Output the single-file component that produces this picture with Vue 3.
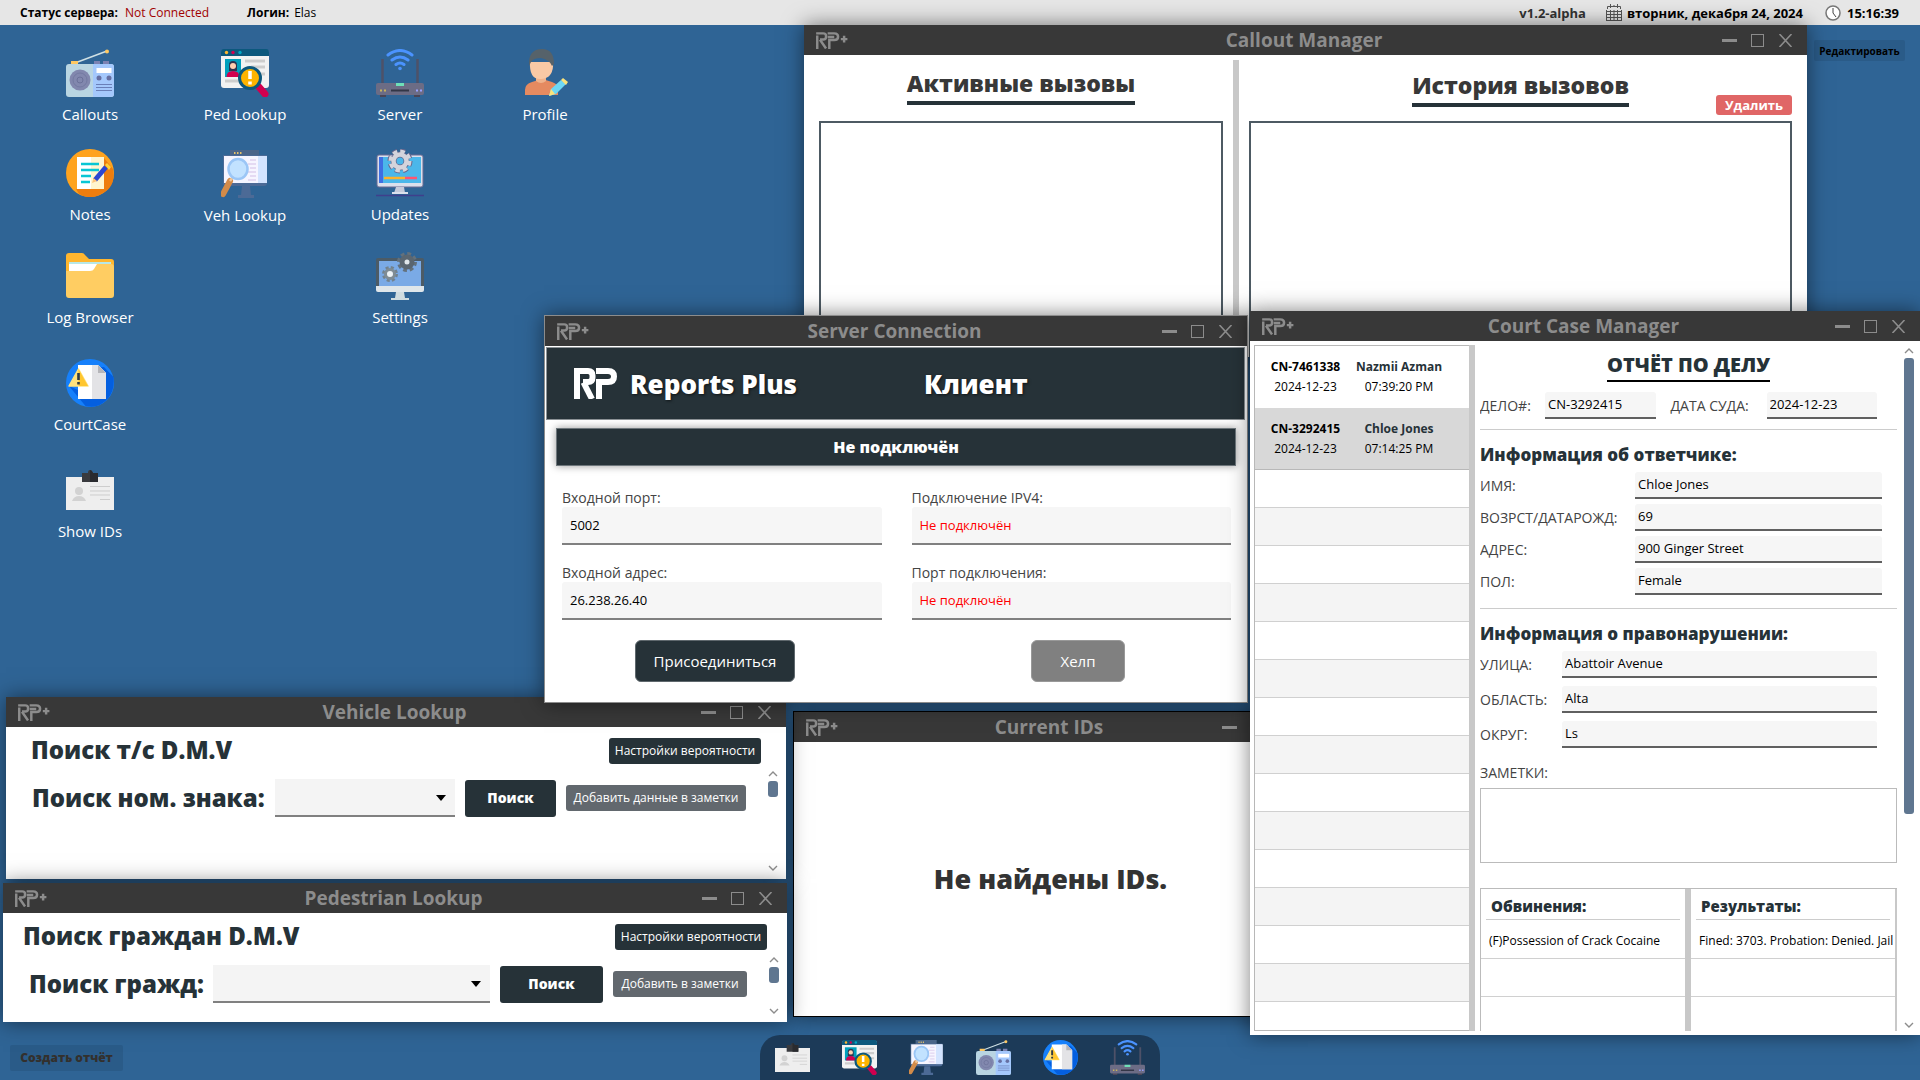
<script setup>
import { ref } from 'vue'

const shortcuts = [
  { icon: 'radio', label: 'Callouts', x: 90, y: 49 },
  { icon: 'ped', label: 'Ped Lookup', x: 245, y: 49 },
  { icon: 'router', label: 'Server', x: 400, y: 49 },
  { icon: 'profile', label: 'Profile', x: 545, y: 49 },
  { icon: 'notes', label: 'Notes', x: 90, y: 149 },
  { icon: 'veh', label: 'Veh Lookup', x: 245, y: 150 },
  { icon: 'updates', label: 'Updates', x: 400, y: 149 },
  { icon: 'folder', label: 'Log Browser', x: 90, y: 252 },
  { icon: 'settings', label: 'Settings', x: 400, y: 252 },
  { icon: 'court', label: 'CourtCase', x: 90, y: 359 },
  { icon: 'idcard', label: 'Show IDs', x: 90, y: 466 },
]
const dock = [
  { icon: 'idcard', label: 'Show IDs' },
  { icon: 'ped', label: 'Ped Lookup' },
  { icon: 'veh', label: 'Veh Lookup' },
  { icon: 'radio', label: 'Callouts' },
  { icon: 'court', label: 'CourtCase' },
  { icon: 'router', label: 'Server' },
]
const lookups = [
  {
    id: 'vehicle', title: 'Vehicle Lookup', heading: 'Поиск т/с D.M.V', label: 'Поиск ном. знака:',
    add: 'Добавить данные в заметки',
  },
  {
    id: 'pedestrian', title: 'Pedestrian Lookup', heading: 'Поиск граждан D.M.V', label: 'Поиск гражд:',
    add: 'Добавить в заметки',
  },
]
const connection = ref([
  { id: 'in-port', label: 'Входной порт:', value: '5002' },
  { id: 'ipv4', label: 'Подключение IPV4:', value: 'Не подключён', off: true },
  { id: 'in-addr', label: 'Входной адрес:', value: '26.238.26.40' },
  { id: 'out-port', label: 'Порт подключения:', value: 'Не подключён', off: true },
])
const cases = [
  { number: 'CN-7461338', name: 'Nazmii Azman', date: '2024-12-23', time: '07:39:20 PM' },
  { number: 'CN-3292415', name: 'Chloe Jones', date: '2024-12-23', time: '07:14:25 PM' },
]
const defendant = ref([
  { id: 'name', label: 'ИМЯ:', value: 'Chloe Jones' },
  { id: 'age', label: 'ВОЗРСТ/ДАТАРОЖД:', value: '69' },
  { id: 'address', label: 'АДРЕС:', value: '900 Ginger Street' },
  { id: 'gender', label: 'ПОЛ:', value: 'Female' },
])
const offence = ref([
  { id: 'street', label: 'УЛИЦА:', value: 'Abattoir Avenue' },
  { id: 'area', label: 'ОБЛАСТЬ:', value: 'Alta' },
  { id: 'county', label: 'ОКРУГ:', value: 'Ls' },
])
const results = [
  { id: 'charges', title: 'Обвинения:', row: '(F)Possession of Crack Cocaine' },
  { id: 'outcomes', title: 'Результаты:', row: 'Fined: 3703. Probation: Denied. Jail' },
]
const caseNumber = ref('CN-3292415')
const courtDate = ref('2024-12-23')
</script>

<template>
  <div class="desktop">
    <svg class="defs" width="0" height="0" aria-hidden="true">
      <symbol id="rp" viewBox="0 0 43 31">
        <g fill="none" stroke="currentColor" stroke-width="6">
          <path d="M0 3h14q4.500 0 4.500 4.500v2q0 4.500-4.500 4.500H9" />
          <path d="M3 6V31" />
          <path d="M9.500 14.500 18 31" />
          <path d="M22 3h12q6 0 6 5.500T34 14h-9v17" />
        </g>
      </symbol>
      <symbol id="rp-plus" viewBox="0 0 58 31">
        <g fill="none" stroke="currentColor" stroke-width="4.500">
          <path d="M1 2.500h13q5 0 5 4.500v2q0 4.500-5 4.500H8" />
          <path d="M3 6.500V31M8 14l11 16" />
          <path d="M22 2.500h12q7 0 7 6t-7 6h-9V31M22 9h12" />
          <path d="M46 13h12M52 7v12" />
        </g>
      </symbol>
      <symbol id="min" viewBox="0 0 15 13"><path d="M0 6.500h15" stroke="currentColor" stroke-width="3" /></symbol>
      <symbol id="max" viewBox="0 0 15 13"><rect x="1.500" y=".5" width="12" height="12" fill="none" stroke="currentColor" /></symbol>
      <symbol id="close" viewBox="0 0 15 13"><path d="m1.500 0 12 13m0-13-12 13" stroke="currentColor" stroke-width="1.600" /></symbol>
      <symbol id="up" viewBox="0 0 10 6"><path d="m1 5 4-4 4 4" fill="none" stroke="#8c8c8c" stroke-width="1.400" /></symbol>
      <symbol id="down" viewBox="0 0 10 6"><path d="m1 1 4 4 4-4" fill="none" stroke="#8c8c8c" stroke-width="1.400" /></symbol>
      <symbol id="calendar" viewBox="0 0 16 17">
        <path d="M1.500 5V2.500h13V5M4.500 0v4M8 1v2M11.500 0v4" fill="none" stroke="#555" />
        <path d="M0 7.500h16M0 10.500h16M0 13.500h16M.5 6v10.500M4.500 6v10.500M8 6v10.500M11.500 6v10.500M15.500 6v10.500M0 16.500h16" stroke="#555" fill="none" />
      </symbol>
      <symbol id="clock" viewBox="0 0 16 16">
        <circle cx="8" cy="8" r="7" fill="#fff" stroke="#777" stroke-width="1.500" />
        <path d="M8 3v5l3 4" fill="none" stroke="#444" />
      </symbol>

      <symbol id="radio" viewBox="0 0 48 48">
        <path d="M9 14 41 2" stroke="#cfe0e4" stroke-width="1.500" />
        <circle cx="41" cy="2.500" r="2" fill="#ffc862" />
        <rect x="5" y="12" width="7" height="4" fill="#ffc862" />
        <path d="M28 12h6v4h-6zM37 12h6v4h-6z" fill="#7d83b3" />
        <rect y="15" width="48" height="33" rx="3" fill="#b9d5e2" />
        <path d="M27 15h18a3 3 0 0 1 3 3v27a3 3 0 0 1-3 3H27z" fill="#a4c8fc" />
        <circle cx="14" cy="31" r="10.500" fill="#8288ae" />
        <circle cx="14" cy="31" r="7" fill="none" stroke="#737aa2" />
        <circle cx="14" cy="31" r="3" fill="none" stroke="#6b7199" />
        <rect x="30.500" y="19" width="15" height="5" fill="#fff" />
        <circle cx="33" cy="29" r="2.500" fill="#6670a2" /><circle cx="43" cy="29" r="2.500" fill="#6670a2" />
        <path d="M30 35.500h16M30 38.500h16M30 41.500h16" stroke="#6a7fb8" />
      </symbol>
      <symbol id="ped" viewBox="0 0 48 48">
        <rect y="1" width="48" height="38" rx="3" fill="#f2f2f2" />
        <path d="M0 7V3a3 3 0 0 1 3-3h42a3 3 0 0 1 3 3v4z" fill="#0c587d" />
        <circle cx="5.500" cy="3.500" r="1.700" fill="#fdb62f" /><circle cx="12" cy="3.500" r="1.700" fill="#d1004f" /><circle cx="19" cy="3.500" r="1.700" fill="#00a7c4" />
        <rect x="4" y="10" width="16" height="18" fill="#00a0bc" />
        <path d="M8 22v-6q0-4 4-4t4 4v6z" fill="#2c3550" />
        <circle cx="12" cy="17" r="3" fill="#ffd0b0" />
        <path d="M5.500 28q0-6 6.500-6t6.500 6z" fill="#d1004f" />
        <path d="M24 12h20M30 18h14M38 25h6M4 32h14" stroke="#cdcdcd" stroke-width="3" />
        <path d="m38 38 6 7" stroke="#d1004f" stroke-width="7" stroke-linecap="round" />
        <circle cx="29" cy="29" r="10.500" fill="#fdb400" stroke="#0c587d" stroke-width="3" />
        <path d="M29 22v8M29 32.500v3" stroke="#fff" stroke-width="3.500" />
      </symbol>
      <symbol id="router" viewBox="0 0 48 48">
        <path d="M12 6q12-9 24 0M16 11q8-6 16 0M20 15.500q4-3 8 0" fill="none" stroke="#4b93ff" stroke-width="3" stroke-linecap="round" />
        <circle cx="24" cy="19.500" r="1.800" fill="#4b93ff" />
        <path d="M6.500 10v26M41.500 10v26" stroke="#4e5168" stroke-width="2.500" />
        <path d="M4 45h6v3H4zM38 45h6v3h-6z" fill="#4a4556" />
        <rect y="34" width="48" height="12" rx="2" fill="#6c6c85" />
        <rect x="20" y="34" width="8" height="3" fill="#6fe0b8" />
        <path d="M15 41.500h18" stroke="#333647" stroke-width="2" />
        <path d="M4 41.500h2M8 41.500h2" stroke="#c9b45c" stroke-width="2" />
        <path d="M40 41.500h2M44 41.500h2" stroke="#98a0ff" stroke-width="2" />
      </symbol>
      <symbol id="profile" viewBox="0 0 48 48">
        <path d="M4 46V41q0-6 7-8l8-2.500h4l8 2.500q6 2 6 6v7z" fill="#e58a60" />
        <path d="M15 24h10v8q-5 4-10 0z" fill="#f0b38c" />
        <path d="M9 13h23q1 16-11.500 17T9 13z" fill="#f9c9a5" />
        <path d="M8 17Q7 0 21 0q12 0 12 15l-2 2q-2-6-11-8-8 0-10 4z" fill="#56626a" />
        <path d="m28 47 2-7L40 31l5 4-10 10z" fill="#6ed8f5" />
        <path d="m40 31 2-2 5 4-2 3zM28 47l2-7 4 5z" fill="#fbe37b" />
      </symbol>
      <symbol id="notes" viewBox="0 0 48 48">
        <circle cx="24" cy="24" r="24" fill="#ffa31e" />
        <path d="M38 9 47 20q4 20-16 27-10 3-18-2l-3-5 28-3z" fill="#ee7d0e" />
        <path d="M11 8h27v32H11z" fill="#fff" /><path d="M25 8h13v32H25z" fill="#fff5cf" />
        <path d="M15 15h18M15 21h18M15 27h10M15 33h9" stroke="#08c6d4" stroke-width="2.500" />
        <path d="M29 31 40 18" stroke="#2d46d0" stroke-width="5" />
        <path d="m39 16 2-2 4 4-2 3z" fill="#ffd236" /><path d="m26 34 1.500-5 3.500 3z" fill="#ffc37a" />
      </symbol>
      <symbol id="veh" viewBox="0 0 48 48">
        <path d="M9 0h29v7H9z" fill="#4a6589" />
        <path d="M13 3h1.500M16 3h1.500M19 3h1.500" stroke="#e5c16a" stroke-width="2" />
        <path d="M2 5h44v28a3 3 0 0 1-3 3H5a3 3 0 0 1-3-3z" fill="#4c6a96" />
        <path d="M3 6h43v27H3z" fill="#f6f5ff" /><path d="M37 6h9v27h-9z" fill="#d3e4ff" />
        <path d="M29 10h6M27 14h8M29 18h6M27 22h8M29 26h6M27 30h8" stroke="#d3bfe6" />
        <path d="M21 36h8l1 9h3v3H17v-3h3z" fill="#4c6a96" />
        <path d="m9 31-7 13" stroke="#d38b49" stroke-width="6" stroke-linecap="round" />
        <path d="m9 31 3-4" stroke="#f0c89c" stroke-width="2.500" />
        <ellipse cx="17" cy="19" rx="9.500" ry="10" fill="#c2e2ff" stroke="#9bc6f6" stroke-width="2.500" />
      </symbol>
      <symbol id="updates" viewBox="0 0 48 48">
        <rect x="1" y="6" width="46" height="32" rx="2" fill="#dbe0ec" stroke="#6b6b93" />
        <path d="M3 8h42v26H3z" fill="#4bb7ea" /><path d="M3 8h4v26H3z" fill="#3f6fe2" />
        <circle cx="24" cy="12" r="10" fill="none" stroke="#66668c" stroke-width="5" stroke-dasharray="4.850 3" />
        <circle cx="24" cy="12" r="6.500" fill="#4bb7ea" stroke="#66668c" stroke-width="6" />
        <circle cx="24" cy="12" r="9.500" fill="none" stroke="#d4d4dc" stroke-width="4" stroke-dasharray="4.460 3" />
        <circle cx="24" cy="12" r="6.500" fill="none" stroke="#d4d4dc" stroke-width="4.500" />
        <path d="M8 29h21" stroke="#ffb22a" stroke-width="2.500" /><path d="M29 29h12" stroke="#ff5470" stroke-width="2.500" />
        <path d="M20 38h8l1 6H18z" fill="#c6cbdc" /><path d="M0 46.500h48" stroke="#3f3f8c" stroke-width="1.500" /><path d="M16 44h16" stroke="#dbe0ec" stroke-width="2" />
      </symbol>
      <symbol id="folder" viewBox="0 0 48 48">
        <path d="M0 4q0-3 3-3h13q2 0 3 2l4 4h22q3 0 3 3v12H0z" fill="#ffb62f" />
        <path d="M3 10h42v10H3z" fill="#b7e8e8" /><path d="M3 12h36v9H3z" fill="#fff" />
        <path d="M0 19h24q3 0 4-2l3-5h14q3 0 3 3v28q0 3-3 3H3q-3 0-3-3z" fill="#ffcd62" />
      </symbol>
      <symbol id="settings" viewBox="0 0 48 48">
        <path d="M0 8q0-2 2-2h44q2 0 2 2v27H0z" fill="#4c5b66" />
        <path d="M3 9h42v26H3z" fill="#7aaae6" /><path d="M0 34h48v4q0 2-2 2H2q-2 0-2-2z" fill="#dfe6ea" />
        <path d="M20 40h8l1 6h4v2H15v-2h4z" fill="#d0dce0" />
        <circle cx="31" cy="10" r="8" fill="none" stroke="#63717c" stroke-width="4" stroke-dasharray="3.600 2.680" />
        <circle cx="31" cy="10" r="5" fill="#dfe6ea" stroke="#5a6670" stroke-width="5" />
        <circle cx="14" cy="22" r="6.500" fill="none" stroke="#72828e" stroke-width="3" stroke-dasharray="3 2.100" />
        <circle cx="14" cy="22" r="4.500" fill="#eef3f5" stroke="#7f8c94" stroke-width="3" />
      </symbol>
      <symbol id="court" viewBox="0 0 48 48">
        <circle cx="24" cy="24" r="24" fill="#1680fb" />
        <path d="m3 27 9 4V10l26-2 9.500 10q2 20-14 28-6 3-14 1z" fill="#045fe0" />
        <path d="M12 6h20l8 8v26H12z" fill="#fff" /><path d="M26 6h6l8 8v26H26z" fill="#e3e3e6" />
        <path d="M32 6v8h8z" fill="#b6b6ba" />
        <path d="M12.500 10 22 27H3z" fill="#ffe27d" stroke="#ffe27d" stroke-width="1.500" stroke-linejoin="round" />
        <path d="M12.500 10 22 27h-9.500z" fill="#ffc630" />
        <path d="M12.500 14v7M12.500 23v2.500" stroke="#2f3a44" stroke-width="2.600" />
      </symbol>
      <symbol id="idcard" viewBox="0 0 48 48">
        <path d="M0 11h48v33H0z" fill="#eee" />
        <circle cx="13" cy="25" r="4" fill="#d2d2d2" /><path d="M6 35q2-5 7-5t7 5z" fill="#d2d2d2" />
        <path d="M24 20.500h20M24 25h20M24 29h20M34 33.500h10" stroke="#cdcdcd" />
        <path d="M16 7h6q0-3 2-3t3 3h5v9H16z" fill="#393a3e" /><path d="M24 4q2 0 3 3h5v9h-8z" fill="#2a2b2f" />
      </symbol>
    </svg>

    <header class="topbar">
      <div class="status">
        <b>Статус сервера:</b><span class="offline">Not Connected</span>
        <b class="login">Логин:</b><span>Elas</span>
      </div>
      <div class="clock">
        <b class="version">v1.2-alpha</b>
        <svg width="16" height="17"><use href="#calendar" /></svg>
        <b class="date">вторник, декабря 24, 2024</b>
        <svg width="16" height="16"><use href="#clock" /></svg>
        <b>15:16:39</b>
      </div>
    </header>

    <button
      v-for="s in shortcuts" :key="s.label" class="shortcut" type="button"
      :style="{ left: s.x + 'px', top: s.y + 'px' }"
    >
      <svg width="48" height="48"><use :href="'#' + s.icon" /></svg>
      <span>{{ s.label }}</span>
    </button>

    <button class="ghost edit" type="button">Редактировать</button>
    <button class="ghost create" type="button">Создать отчёт</button>

    <section class="window callouts">
      <div class="titlebar">
        <svg class="logo"><use href="#rp-plus" /></svg>
        <h2>Callout Manager</h2>
        <div class="controls">
          <button v-for="c in ['min', 'max', 'close']" :key="c" type="button" :aria-label="c"><svg><use :href="'#' + c" /></svg></button>
        </div>
      </div>
      <div class="callout-body">
        <div class="pane">
          <div class="pane-head"><h3>Активные вызовы</h3></div>
          <div class="box"></div>
        </div>
        <div class="divider"></div>
        <div class="pane">
          <div class="pane-head history">
            <h3>История вызовов</h3>
            <button class="delete" type="button">Удалить</button>
          </div>
          <div class="box"></div>
        </div>
      </div>
    </section>

    <section class="window ids">
      <div class="titlebar">
        <svg class="logo"><use href="#rp-plus" /></svg>
        <h2>Current IDs</h2>
        <div class="controls">
          <button v-for="c in ['min', 'max', 'close']" :key="c" type="button" :aria-label="c"><svg><use :href="'#' + c" /></svg></button>
        </div>
      </div>
      <p class="empty">Не найдены IDs.</p>
    </section>

    <section v-for="l in lookups" :key="l.id" class="window lookup" :class="l.id">
      <div class="titlebar">
        <svg class="logo"><use href="#rp-plus" /></svg>
        <h2>{{ l.title }}</h2>
        <div class="controls">
          <button v-for="c in ['min', 'max', 'close']" :key="c" type="button" :aria-label="c"><svg><use :href="'#' + c" /></svg></button>
        </div>
      </div>
      <div class="lookup-head">
        <h3>{{ l.heading }}</h3>
        <button class="dark small" type="button">Настройки вероятности</button>
      </div>
      <div class="lookup-scroll">
        <form class="lookup-form" @submit.prevent>
          <label :for="l.id + '-query'">{{ l.label }}</label>
          <div class="combo">
            <select :id="l.id + '-query'"><option></option></select>
            <svg width="10" height="6" viewBox="0 0 10 6"><path d="M0 0h10L5 6z" /></svg>
          </div>
          <button class="dark search" type="submit">Поиск</button>
          <button class="grey small" type="button">{{ l.add }}</button>
        </form>
        <div class="scrollbar">
          <svg width="10" height="6"><use href="#up" /></svg>
          <div class="thumb"></div>
          <svg width="10" height="6"><use href="#down" /></svg>
        </div>
      </div>
    </section>

    <section class="window server">
      <div class="titlebar">
        <svg class="logo"><use href="#rp-plus" /></svg>
        <h2>Server Connection</h2>
        <div class="controls">
          <button v-for="c in ['min', 'max', 'close']" :key="c" type="button" :aria-label="c"><svg><use :href="'#' + c" /></svg></button>
        </div>
      </div>
      <div class="banner">
        <div class="brand"><svg width="43" height="31"><use href="#rp" /></svg><span>Reports Plus</span></div>
        <span>Клиент</span>
      </div>
      <div class="state">Не подключён</div>
      <form class="connection" @submit.prevent>
        <div v-for="f in connection" :key="f.id" class="field">
          <label :for="f.id">{{ f.label }}</label>
          <input :id="f.id" v-model="f.value" type="text" :class="{ off: f.off }">
        </div>
      </form>
      <div class="actions">
        <button class="join" type="button">Присоединиться</button>
        <button class="help" type="button">Хелп</button>
      </div>
    </section>

    <section class="window court">
      <div class="titlebar">
        <svg class="logo"><use href="#rp-plus" /></svg>
        <h2>Court Case Manager</h2>
        <div class="controls">
          <button v-for="c in ['min', 'max', 'close']" :key="c" type="button" :aria-label="c"><svg><use :href="'#' + c" /></svg></button>
        </div>
      </div>
      <div class="court-body">
        <ul class="cases">
          <li v-for="(c, i) in cases" :key="c.number" class="case" :class="{ selected: i === 1 }">
            <div><b>{{ c.number }}</b><span>{{ c.date }}</span></div>
            <div><b class="who">{{ c.name }}</b><span>{{ c.time }}</span></div>
          </li>
          <li v-for="n in 15" :key="n" class="blank"></li>
        </ul>
        <div class="divider"></div>
        <div class="report">
          <h3 class="report-title"><span>ОТЧЁТ ПО ДЕЛУ</span></h3>
          <div class="case-row">
            <label class="l1" for="case-no">ДЕЛО#:</label><input id="case-no" v-model="caseNumber" type="text">
            <label class="l2" for="case-date">ДАТА СУДА:</label><input id="case-date" v-model="courtDate" type="text">
          </div>
          <hr>
          <h4>Информация об ответчике:</h4>
          <div class="rows defendant">
            <div v-for="f in defendant" :key="f.id" class="row">
              <label :for="f.id">{{ f.label }}</label><input :id="f.id" v-model="f.value" type="text">
            </div>
          </div>
          <hr>
          <h4>Информация о правонарушении:</h4>
          <div class="rows offence">
            <div v-for="f in offence" :key="f.id" class="row">
              <label :for="f.id">{{ f.label }}</label><input :id="f.id" v-model="f.value" type="text">
            </div>
          </div>
          <label class="notes-label" for="case-notes">ЗАМЕТКИ:</label>
          <textarea id="case-notes"></textarea>
          <div class="tables">
            <div v-for="r in results" :key="r.id" class="result">
              <table>
                <thead><tr><th scope="col"><span>{{ r.title }}</span></th></tr></thead>
                <tbody><tr><td>{{ r.row }}</td></tr><tr><td></td></tr><tr><td></td></tr></tbody>
              </table>
            </div>
          </div>
        </div>
        <div class="scrollbar tall">
          <svg width="10" height="6"><use href="#up" /></svg>
          <div class="thumb"></div>
          <svg width="10" height="6"><use href="#down" /></svg>
        </div>
      </div>
    </section>

    <nav class="dock">
      <button v-for="d in dock" :key="d.icon" type="button" :aria-label="d.label">
        <svg width="35" height="35"><use :href="'#' + d.icon" /></svg>
      </button>
    </nav>
  </div>
</template>

<style>
body {
  margin: 0;
  background: #2f6495;
}
</style>

<style scoped>
.desktop {
  position: relative;
  min-height: 100vh;
  overflow: hidden;
  background: #2f6495;
  color: #000;
  font: 12px/16px "Open Sans", "Noto Sans", sans-serif;
}
.desktop *,
.desktop *::before {
  box-sizing: border-box;
}
.defs {
  position: absolute;
}
button,
input,
select,
textarea {
  margin: 0;
  padding: 0;
  border: 0;
  border-radius: 0;
  outline: 0;
  background: none;
  color: inherit;
  font: inherit;
}
h2,
h3,
h4,
p,
ul {
  margin: 0;
  padding: 0;
  list-style: none;
}
svg {
  display: block;
  flex: none;
}

.topbar {
  display: flex;
  justify-content: space-between;
  height: 25px;
  padding: 0 21px 0 20px;
  background: #e6e6e6;
}
.status,
.clock {
  display: flex;
  align-items: center;
}
.clock {
  font-size: 13px;
}
.offline {
  margin-left: 7px;
  color: #a00000;
}
.login {
  margin: 0 5px 0 38px;
}
.version {
  margin-right: 20px;
  color: #333;
}
.date {
  margin: 0 22px 0 5px;
}
.clock b:last-child {
  margin-left: 6px;
}

.shortcut {
  position: absolute;
  display: flex;
  flex-direction: column;
  align-items: center;
  gap: 7px;
  width: 110px;
  margin-left: -55px;
  color: #fff;
  font-size: 15px;
  line-height: 20px;
}
.ghost {
  position: absolute;
  border-radius: 2px;
  background: #2a5b88;
  font-weight: 800;
}
.edit {
  top: 40px;
  right: 15px;
  width: 91px;
  height: 21px;
  font-size: 10px;
  font-weight: 700;
}
.create {
  bottom: 9px;
  left: 10px;
  width: 113px;
  height: 26px;
  color: #33302d;
  font-size: 12px;
}

.window {
  position: absolute;
  display: flex;
  flex-direction: column;
  background: #fff;
  box-shadow: 0 0 20px rgba(0, 0, 0, .5);
}
.titlebar {
  display: grid;
  flex: none;
  grid-template-columns: 1fr auto 1fr;
  align-items: center;
  height: 30px;
  padding: 0 14px 0 11px;
  background: #383838;
  color: #8c8c8c;
}
.titlebar h2 {
  font-size: 19px;
  font-weight: 700;
  line-height: 28px;
}
.logo {
  width: 33px;
  height: 17px;
}
.controls {
  display: flex;
  gap: 13px;
  justify-self: end;
}
.controls svg {
  width: 15px;
  height: 13px;
}
.divider {
  width: 6px;
  background: #c8c8c8;
}

.callouts {
  top: 25px;
  left: 804px;
  width: 1003px;
  height: 332px;
}
.callout-body {
  display: grid;
  flex: 1;
  grid-template-columns: 404px 6px 1fr;
  gap: 10px;
  padding: 0 15px;
}
.callout-body .divider {
  margin-top: 5px;
}
.pane {
  display: flex;
  flex-direction: column;
}
.pane-head {
  display: grid;
  grid-template-columns: 1fr auto 1fr;
  align-items: end;
  height: 66px;
  padding-bottom: 16px;
}
.pane-head h3 {
  grid-column: 2;
  padding-bottom: 3px;
  border-bottom: 4px solid #263238;
  color: #383838;
  font-size: 23px;
  font-weight: 800;
  line-height: 30px;
}
.pane-head.history {
  padding-bottom: 6px;
}
.history h3 {
  margin-bottom: 8px;
}
.delete {
  justify-self: end;
  width: 76px;
  height: 20px;
  border-radius: 3px;
  background: #e06666;
  color: #fff;
  font-size: 13px;
  font-weight: 700;
  line-height: 18px;
}
.box {
  flex: 1;
  border: 2px solid #4d5a63;
}

.ids {
  top: 711px;
  left: 793px;
  width: 515px;
  height: 306px;
  border: 1px solid #000;
}
.empty {
  display: flex;
  flex: 1;
  align-items: center;
  justify-content: center;
  color: #333;
  font-size: 27px;
  font-weight: 800;
}

.vehicle {
  top: 697px;
  left: 6px;
  width: 780px;
  height: 182px;
}
.pedestrian {
  top: 883px;
  left: 3px;
  width: 784px;
  height: 139px;
}
.lookup-head {
  display: flex;
  align-items: center;
  justify-content: space-between;
  height: 43px;
  padding: 5px 25px 0;
}
.pedestrian .lookup-head {
  padding: 5px 20px 0;
}
.lookup-head h3,
.lookup-form label {
  color: #263238;
  font-size: 24px;
  font-weight: 800;
  line-height: 32px;
  white-space: nowrap;
}
.lookup-head h3 {
  padding-bottom: 3px;
}
.lookup-scroll {
  display: flex;
  flex: 1;
  padding-right: 8px;
}
.lookup-form {
  display: flex;
  flex: 1;
  align-items: center;
  gap: 10px;
  height: 38px;
  margin: 9px 0 0 26px;
}
.lookup-form label {
  width: 233px;
}
.pedestrian .lookup-form label {
  width: 174px;
}
.combo {
  position: relative;
  width: 180px;
}
.pedestrian .combo {
  width: 277px;
}
.combo select {
  display: block;
  width: 100%;
  height: 38px;
  border-bottom: 2px solid #808080;
  background: #f4f4f4;
  appearance: none;
}
.combo svg {
  position: absolute;
  top: 16px;
  right: 9px;
  pointer-events: none;
}
.dark {
  border-radius: 3px;
  background: #263238;
  color: #fff;
}
.grey {
  border-radius: 3px;
  background: #62686e;
  color: #fff;
}
.small {
  width: 152px;
  height: 26px;
  font-size: 12px;
  white-space: nowrap;
}
.vehicle .grey {
  width: 180px;
}
.pedestrian .grey {
  width: 134px;
}
.search {
  width: 91px;
  height: 37px;
  font-size: 14px;
  font-weight: 800;
}
.pedestrian .search {
  width: 103px;
}
.scrollbar {
  display: flex;
  flex-direction: column;
  align-items: center;
  width: 10px;
  padding: 1px 0 8px;
}
.thumb {
  width: 10px;
  height: 16px;
  margin: 4px 0 auto;
  border-radius: 3px;
  background: #5f7690;
}

.server {
  top: 315px;
  left: 544px;
  width: 704px;
  height: 388px;
  border: 1px solid #8c8c8c;
}
.banner {
  display: grid;
  grid-template-columns: 377px 1fr;
  align-items: center;
  height: 73px;
  margin: 1px 2px 0 1px;
  border: 1px solid #8c9296;
  background: #263238;
  color: #fff;
  font-size: 26px;
  font-weight: 800;
  line-height: 34px;
  text-shadow: 1px 1px 3px rgba(0, 0, 0, .6);
}
.brand {
  display: flex;
  align-items: center;
  gap: 13px;
  padding-left: 27px;
}
.state {
  height: 38px;
  margin: 8px 11px 0;
  border: 1px solid #6d767b;
  background: #263238;
  box-shadow: 0 0 8px rgba(0, 0, 0, .4);
  color: #fff;
  font-size: 16px;
  font-weight: 800;
  line-height: 36px;
  text-align: center;
}
.connection {
  display: grid;
  grid-template-columns: 1fr 1fr;
  gap: 18px 30px;
  padding: 22px 16px 20px 17px;
}
.field {
  display: flex;
  flex-direction: column;
}
.field label {
  color: #444;
  font-size: 14px;
  line-height: 19px;
}
.field input {
  height: 38px;
  padding: 0 8px;
  border-bottom: 2px solid #808080;
  border-radius: 3px 3px 0 0;
  background: #f6f6f6;
  font-size: 13px;
}
.field .off {
  color: #f00;
}
.actions {
  display: flex;
  gap: 236px;
  padding-left: 90px;
}
.join,
.help {
  width: 160px;
  height: 42px;
  border: 1px solid #5f686d;
  border-radius: 6px;
  background: #263238;
  color: #fff;
  font-size: 15px;
}
.help {
  width: 94px;
  border-color: #999;
  background: #808080;
}

.court {
  top: 311px;
  right: 0;
  width: 670px;
  height: 724px;
}
.court-body {
  display: grid;
  flex: 1;
  grid-template-columns: 215px 6px 1fr 10px;
  min-height: 0;
  padding: 4px 6px 4px 4px;
}
.cases {
  overflow: hidden;
  border: 1px solid #b8b8b8;
  border-right: 0;
}
.case {
  display: grid;
  grid-template-columns: 101px 86px;
  height: 62px;
  padding-top: 11px;
  line-height: 20px;
  text-align: center;
}
.case b,
.case span {
  display: block;
  white-space: nowrap;
}
.case .who {
  color: #263238;
}
.selected {
  border-bottom: 1px solid #b8b8b8;
  background: #d8d8d8;
}
.blank {
  height: 38px;
  border-bottom: 1px solid #d0d0d0;
}
.blank:nth-child(even) {
  background: #f4f4f4;
}
.report {
  display: flex;
  flex-direction: column;
  min-width: 0;
  min-height: 0;
  margin: 0 7px 0 5px;
  overflow: hidden;
}
.report-title {
  margin-top: 7px;
  color: #263238;
  font-size: 20px;
  font-weight: 800;
  line-height: 26px;
  text-align: center;
}
.report-title span {
  display: inline-block;
  padding-bottom: 2px;
  border-bottom: 2px solid #000;
}
.report label {
  color: #444;
  font-size: 14px;
  line-height: 20px;
}
.report input {
  height: 27px;
  padding: 0 3px 2px;
  border-bottom: 2px solid #606060;
  border-radius: 3px 3px 0 0;
  background: #f6f6f6;
  font-size: 13px;
}
.case-row {
  display: flex;
  align-items: center;
  margin-top: 10px;
  padding-right: 20px;
}
.case-row input {
  flex: 1;
  min-width: 0;
}
.case-row .l1 {
  width: 65px;
}
.case-row .l2 {
  width: 96px;
  margin-left: 15px;
}
hr {
  width: 100%;
  margin: 10px 0 13px;
  border: 0;
  border-top: 1px solid #ccc;
}
h4 {
  margin-bottom: 5px;
  color: #263238;
  font-size: 17px;
  font-weight: 800;
  line-height: 24px;
}
.rows {
  display: flex;
  flex-direction: column;
  gap: 5px;
  padding: 0 15px 3px 0;
}
.row {
  display: grid;
  grid-template-columns: 155px 1fr;
  align-items: center;
}
.offence {
  gap: 8px;
  padding: 0 20px 0 0;
}
.offence .row {
  grid-template-columns: 82px 1fr;
}
.report .notes-label {
  margin: 15px 0 5px;
}
textarea {
  flex: none;
  height: 75px;
  border: 1px solid #bbb;
  resize: none;
}
.tables {
  display: grid;
  flex: 1;
  grid-template-columns: 51fr 50fr;
  min-height: 0;
  margin-top: 25px;
  overflow: hidden;
  border-top: 1px solid #bbb;
  border-left: 1px solid #bbb;
}
.result {
  min-width: 0;
  overflow: hidden;
  border-right: 6px solid #c8c8c8;
}
.result:last-child {
  border-right: 2px solid #c8c8c8;
}
table {
  width: 100%;
  border-collapse: collapse;
  table-layout: fixed;
}
th {
  padding: 0 5px;
  text-align: left;
}
th span {
  display: block;
  height: 31px;
  padding-left: 5px;
  border-bottom: 1px solid #ccc;
  color: #263238;
  font-size: 15px;
  font-weight: 800;
  line-height: 34px;
}
td {
  height: 38px;
  padding: 5px 0 0 8px;
  overflow: hidden;
  border-bottom: 1px solid #d0d0d0;
  white-space: nowrap;
}
.tall {
  padding: 3px 0;
}
.tall .thumb {
  height: 456px;
}
.dock {
  position: absolute;
  bottom: 0;
  left: 50%;
  display: flex;
  justify-content: space-between;
  width: 400px;
  height: 45px;
  margin-left: -200px;
  padding: 5px 15px;
  border-radius: 20px 20px 0 0;
  background: #1c3a58;
}
</style>
